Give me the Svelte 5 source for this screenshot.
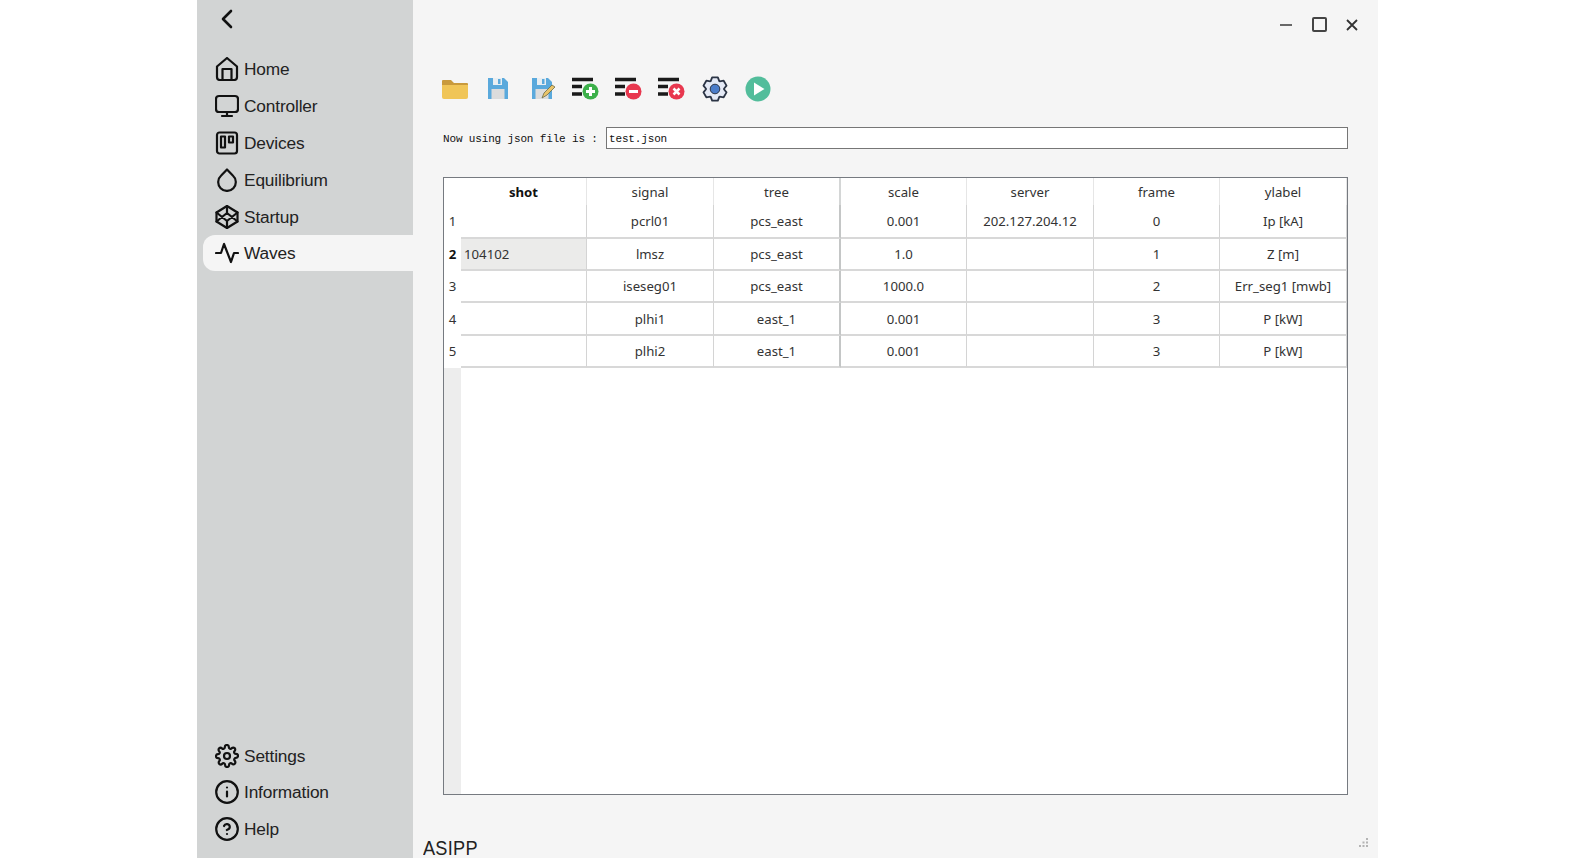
<script>
  const topNav = [
    { label: "Home", icon: "home" },
    { label: "Controller", icon: "monitor" },
    { label: "Devices", icon: "trello" },
    { label: "Equilibrium", icon: "droplet" },
    { label: "Startup", icon: "codepen" },
    { label: "Waves", icon: "activity", active: true }
  ];
  const bottomNav = [
    { label: "Settings", icon: "settings" },
    { label: "Information", icon: "info" },
    { label: "Help", icon: "help" }
  ];
  const columns = ["shot", "signal", "tree", "scale", "server", "frame", "ylabel"];
  const rows = [
    ["", "pcrl01", "pcs_east", "0.001", "202.127.204.12", "0", "Ip [kA]"],
    ["104102", "lmsz", "pcs_east", "1.0", "", "1", "Z [m]"],
    ["", "iseseg01", "pcs_east", "1000.0", "", "2", "Err_seg1 [mwb]"],
    ["", "plhi1", "east_1", "0.001", "", "3", "P [kW]"],
    ["", "plhi2", "east_1", "0.001", "", "3", "P [kW]"]
  ];

  // six-tooth cog for the toolbar
  function gearPath(cx, cy, outer, inner) {
    let d = "";
    for (let i = 0; i < 6; i++) {
      const a = (i * Math.PI) / 3 - Math.PI / 2;
      const pts = [
        [inner, a - 0.5],
        [outer, a - 0.24],
        [outer, a + 0.24],
        [inner, a + 0.5]
      ];
      for (const [r, t] of pts) {
        d += (d ? "L" : "M") + (cx + r * Math.cos(t)).toFixed(2) + " " + (cy + r * Math.sin(t)).toFixed(2);
      }
    }
    return d + "Z";
  }
</script>

{#snippet navIcon(name)}
  <svg class="nav-icon" viewBox="0 0 24 24" fill="none" stroke="#111" stroke-width="2.200" stroke-linecap="round" stroke-linejoin="round">
    {#if name === "home"}
      <path d="M2 9.500 12 1l10 8.500V20a3 3 0 0 1-3 3H5a3 3 0 0 1-3-3z" />
      <path d="M7.500 23V12h9v11" />
    {:else if name === "monitor"}
      <rect x="1" y="2" width="22" height="16" rx="3" />
      <path d="M7 22h10M12 18v4" />
    {:else if name === "trello"}
      <rect x="2" y="1.500" width="20" height="21" rx="2.500" />
      <rect x="6" y="5.500" width="4" height="11" />
      <rect x="14" y="5.500" width="4" height="6" />
    {:else if name === "droplet"}
      <path d="M12 1.500l5.800 6a8.800 8.800 0 1 1-11.600 0z" />
    {:else if name === "codepen"}
      <path d="M12 1l10.500 6.500v9L12 23 1.500 16.500v-9z" />
      <path d="M12 23v-7M22.500 7.500 12 16 1.500 7.500M1.500 16.500 12 8l10.500 8.500M12 1v7" />
    {:else if name === "activity"}
      <path d="M23 12h-4l-3 9L9 3l-3 9H1" />
    {:else if name === "settings"}
      <circle cx="12" cy="12" r="3" />
      <path d="M19.400 15a1.650 1.650 0 0 0 .33 1.820l.06.06a2 2 0 1 1-2.830 2.830l-.06-.06a1.650 1.650 0 0 0-2.820 1.170V21a2 2 0 1 1-4 0v-.09a1.650 1.650 0 0 0-2.900-1.100l-.06.06a2 2 0 1 1-2.830-2.830l.06-.06a1.650 1.650 0 0 0-1.170-2.820H3a2 2 0 1 1 0-4h.09a1.650 1.650 0 0 0 1.100-2.900l-.06-.06a2 2 0 1 1 2.830-2.830l.06.06a1.650 1.650 0 0 0 2.820-1.170V3a2 2 0 1 1 4 0v.09a1.650 1.650 0 0 0 2.900 1.100l.06-.06a2 2 0 1 1 2.830 2.830l-.06.06a1.650 1.650 0 0 0 1.170 2.820H21a2 2 0 1 1 0 4h-.09a1.650 1.650 0 0 0-1.510 1.160z" />
    {:else if name === "info"}
      <circle cx="12" cy="12" r="10.800" />
      <path d="M12 16.500v-5M12 7.500h.01" />
    {:else if name === "help"}
      <circle cx="12" cy="12" r="10.800" />
      <path d="M9 9a3 3 0 0 1 5.800 1c0 2-3 3-3 3M12 17h.01" />
    {/if}
  </svg>
{/snippet}

{#snippet listIcon(color, mark)}
  <svg class="tool" viewBox="0 0 28 24">
    <path d="M1 2.500h21M1 9.500h10M1 17h10" stroke="#1a1a1a" stroke-width="3.400" />
    <circle cx="19.500" cy="14.500" r="8" fill={color} />
    {#if mark === "plus"}
      <path d="M15 14.500h9M19.500 10v9" stroke="#fff" stroke-width="3" />
    {:else if mark === "minus"}
      <path d="M15 14.500h9" stroke="#fff" stroke-width="3" />
    {:else}
      <path d="M16.500 11.500l6 6M22.500 11.500l-6 6" stroke="#fff" stroke-width="2.500" />
    {/if}
  </svg>
{/snippet}

{#snippet floppy()}
  <path d="M0 1h16l4 4v17H0z" fill="#5aa9dc" />
  <rect x="5" y="1" width="9" height="7" fill="#e8eef2" />
  <rect x="10" y="2" width="2.500" height="5" fill="#5aa9dc" />
  <rect x="3.500" y="12" width="13" height="10" fill="#dcdcdc" />
{/snippet}

<div class="page">
  <div class="window">
    <aside class="sidebar">
      <button class="back" aria-label="Back">
        <svg viewBox="0 0 24 24" fill="none" stroke="#111" stroke-width="2.600" stroke-linecap="round" stroke-linejoin="round">
          <path d="M16 4l-8 8 8 8" />
        </svg>
      </button>
      <nav class="nav">
        {#each topNav as item}
          <div class="nav-item" class:active={item.active}>
            {@render navIcon(item.icon)}
            <span>{item.label}</span>
          </div>
        {/each}
      </nav>
      <nav class="nav bottom">
        {#each bottomNav as item}
          <div class="nav-item">
            {@render navIcon(item.icon)}
            <span>{item.label}</span>
          </div>
        {/each}
      </nav>
    </aside>

    <main class="main">
      <div class="titlebar">
        <svg viewBox="0 0 14 14" class="win-btn"><path d="M1 7h12" stroke="#444" stroke-width="1.600" /></svg>
        <svg viewBox="0 0 15 15" class="win-btn max"><rect x="1" y="1" width="13" height="13" rx="1" fill="none" stroke="#444" stroke-width="2" /></svg>
        <svg viewBox="0 0 14 14" class="win-btn"><path d="M2 2l10 10M12 2L2 12" stroke="#333" stroke-width="1.800" /></svg>
      </div>

      <div class="toolbar">
        <svg class="tool" viewBox="0 0 28 24">
          <path d="M1 4a1 1 0 0 1 1-1h8l3 3h13a1 1 0 0 1 1 1v3H1z" fill="#c99a3c" />
          <path d="M1 8h26v12a2 2 0 0 1-2 2H3a2 2 0 0 1-2-2z" fill="#f0c557" />
        </svg>
        <svg class="tool" viewBox="0 0 28 24"><g transform="translate(4 0)">{@render floppy()}</g></svg>
        <svg class="tool" viewBox="0 0 28 24">
          <g transform="translate(4 0)">{@render floppy()}</g>
          <path d="M14 21l2-5 8-8 3 2-8 8z" fill="#e9c46a" stroke="#6b6b4a" stroke-width="0.800" />
        </svg>
        {@render listIcon("#3cb04a", "plus")}
        {@render listIcon("#e8384f", "minus")}
        {@render listIcon("#e8384f", "cross")}
        <svg class="tool" viewBox="0 0 28 24">
          <path d={gearPath(14, 12, 12, 9)} fill="#e4e9f5" stroke="#2b3445" stroke-width="1.800" stroke-linejoin="round" />
          <circle cx="14" cy="12" r="4.800" fill="#4a7cc9" stroke="#2b3445" stroke-width="1" />
        </svg>
        <svg class="tool" viewBox="0 0 28 24">
          <circle cx="14" cy="12" r="12.500" fill="#52bd9b" />
          <path d="M10 5.500L20.500 12 10 18.500z" fill="#fff" />
        </svg>
      </div>

      <div class="file-row">
        <span class="file-label">Now using json file is :</span>
        <input class="file-input" value="test.json" />
      </div>

      <div class="table">
        <div class="corner"></div>
        {#each columns as col, i}
          <div class="head" class:bold={i === 0} class:thick={i === 2}>{col}</div>
        {/each}
        {#each rows as row, r}
          <div class="row-head" class:bold={r === 1}>{r + 1}</div>
          {#each row as cell, c}
            <div class="cell" class:selected={r === 1 && c === 0} class:thick={c === 2}>{cell}</div>
          {/each}
        {/each}
        <div class="gutter"></div>
        <div class="blank"></div>
      </div>

      <div class="footer">
        <span class="brand">ASIPP</span>
        <svg class="grip" viewBox="0 0 9 9">
          <path d="M7 0h2v2H7zM3.500 3.500h2v2h-2zM7 3.500h2v2H7zM0 7h2v2H0zM3.500 7h2v2h-2zM7 7h2v2H7z" fill="#b4b4b4" />
        </svg>
      </div>
    </main>
  </div>
</div>

<style>
  :global(body) {
    background: #fff;
  }
  .page {
    width: 1575px;
    height: 858px;
    display: flex;
    justify-content: center;
    overflow: hidden;
  }
  .window {
    width: 1181px;
    display: flex;
    font-family: "Liberation Sans", Arial, sans-serif;
    color: #222;
  }
  .sidebar {
    width: 216px;
    background: #d2d4d4;
    display: flex;
    flex-direction: column;
  }
  .back {
    width: 24px;
    height: 24px;
    margin: 7px 0 0 18px;
    padding: 0;
    border: 0;
    background: none;
  }
  .back svg {
    width: 24px;
    height: 24px;
    display: block;
  }
  .nav {
    display: flex;
    flex-direction: column;
    padding: 20px 0 0 6px;
  }
  .nav.bottom {
    margin-top: auto;
    padding: 0 0 10.500px 6px;
  }
  .nav-item {
    height: 36.800px;
    display: flex;
    align-items: center;
    gap: 5px;
    padding-left: 12px;
    font-size: 17.300px;
    letter-spacing: -0.150px;
    border-radius: 12px 0 0 12px;
  }
  .nav-item span {
    margin-top: 1px;
  }
  .nav-item.active {
    background: #f5f5f5;
    height: 36px;
  }
  .nav-icon {
    width: 24px;
    height: 24px;
    flex: none;
  }
  .main {
    flex: 1;
    background: #f5f5f5;
    display: flex;
    flex-direction: column;
    padding: 0 30px;
  }
  .titlebar {
    height: 49px;
    display: flex;
    justify-content: flex-end;
    align-items: center;
    gap: 18.500px;
    margin-right: -11px;
  }
  .win-btn {
    width: 14px;
    height: 14px;
  }
  .win-btn.max {
    width: 15px;
    height: 15px;
  }
  .toolbar {
    display: flex;
    gap: 15.300px;
    margin-top: 28px;
    height: 24px;
    margin-left: -2px;
  }
  .tool {
    width: 28px;
    height: 24px;
    flex: none;
    overflow: visible;
  }
  .file-row {
    display: flex;
    align-items: center;
    gap: 8px;
    margin-top: 26px;
    height: 22px;
  }
  .file-label,
  .file-input {
    font-family: "Liberation Mono", "Noto Sans CJK SC", monospace;
    font-size: 11px;
    letter-spacing: -0.150px;
    color: #111;
  }
  .file-label {
    width: 155px;
    flex: none;
    white-space: nowrap;
    padding-top: 1px;
  }
  .file-input {
    flex: 1;
    height: 22px;
    box-sizing: border-box;
    border: 1px solid #767676;
    background: #fff;
    padding: 1px 2px 0;
    min-width: 0;
    outline: none;
  }
  .table {
    margin-top: 28px;
    width: 905px;
    height: 618px;
    box-sizing: border-box;
    border: 1px solid #767a80;
    background: #fff;
    display: grid;
    grid-template-columns: 17px 126px 127px 127px 126px 127px 126px 127px;
    grid-template-rows: 27px 34px 32px 32px 33px 32px 1fr;
    font-family: "Noto Sans", "Liberation Sans", sans-serif;
    font-size: 13.200px;
    color: #333;
  }
  .corner,
  .row-head {
    background: #fff;
  }
  .gutter {
    background: #ededed;
  }
  .blank {
    grid-column: 2 / -1;
  }
  .head,
  .cell {
    display: flex;
    align-items: center;
    justify-content: center;
    box-sizing: border-box;
    border-right: 1px solid #d4d4d4;
  }
  .head {
    padding-top: 1px;
    border-right-color: #e6e6e6;
  }
  .cell {
    border-bottom: 2px solid #d8d8d8;
  }
  .thick {
    border-right: 2px solid #c4c6c6;
  }
  .head.thick {
    border-right-color: #d4d6d6;
  }
  .row-head {
    display: flex;
    align-items: center;
    justify-content: center;
    padding-bottom: 2px;
  }
  .bold {
    font-weight: 700;
    color: #111;
  }
  .selected {
    background: #ebebea;
    justify-content: flex-start;
    padding-left: 3px;
  }
  .footer {
    flex: 1;
    display: flex;
    justify-content: space-between;
    align-items: flex-end;
  }
  .brand {
    font-family: "Liberation Sans", Arial, sans-serif;
    font-size: 19.500px;
    color: #222;
    margin-left: -20px;
    margin-bottom: -1px;
    line-height: 22px;
    letter-spacing: 0.300px;
    transform: scaleX(0.93);
    transform-origin: left;
  }
  .grip {
    width: 9px;
    height: 9px;
    margin-bottom: 11px;
    margin-right: -20px;
  }
</style>
